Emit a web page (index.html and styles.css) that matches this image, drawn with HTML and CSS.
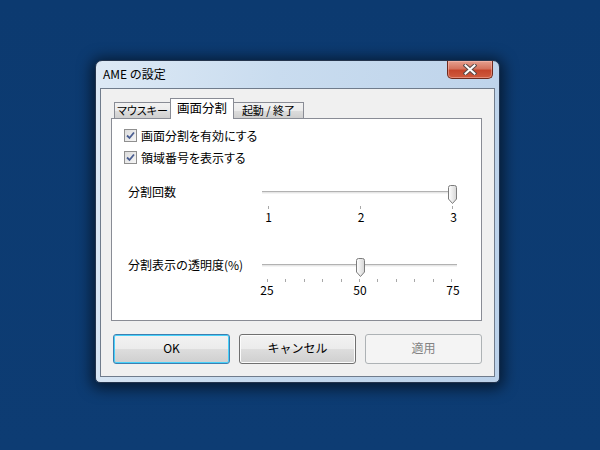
FILE: index.html
```html
<!DOCTYPE html>
<html>
<head>
  <title>AME の設定</title>
  <link rel="stylesheet" href="styles.css">
</head>
<body>
  <div class="desk">
    <div class="window">
      <div class="titlebar">
        <span class="title">AME の設定</span>
        <div class="close-btn">
          <svg width="14" height="11" viewBox="0 0 14 11">
            <path d="M2.5 1.5 L11.5 9.5 M11.5 1.5 L2.5 9.5" stroke="#5a4a48" stroke-width="4" stroke-linecap="square"/>
            <path d="M2.5 1.5 L11.5 9.5 M11.5 1.5 L2.5 9.5" stroke="#ffffff" stroke-width="2" stroke-linecap="square"/>
          </svg>
        </div>
      </div>

      <div class="client">
        <div class="tabs">
          <div class="tab tab-first">マウスキー</div>
          <div class="tab active">画面分割</div>
          <div class="tab tab-last">起動 / 終了</div>
        </div>

        <div class="panel">
          <label class="check-row">
            <span class="checkbox">
              <svg width="13" height="13" viewBox="0 0 13 13">
                <path d="M3 6.5 L5.5 9 L10 3.5" fill="none" stroke="#4a5e92" stroke-width="1.8"/>
              </svg>
            </span>
            画面分割を有効にする
          </label>
          <label class="check-row">
            <span class="checkbox">
              <svg width="13" height="13" viewBox="0 0 13 13">
                <path d="M3 6.5 L5.5 9 L10 3.5" fill="none" stroke="#4a5e92" stroke-width="1.8"/>
              </svg>
            </span>
            領域番号を表示する
          </label>

          <div class="setting setting-count">
            <div class="setting-label">分割回数</div>
            <div class="slider">
              <div class="track-wrap">
                <div class="track"></div>
                <svg class="thumb" style="left: 185px" width="11" height="20" viewBox="0 0 11 20">
                  <defs>
                    <linearGradient id="tg1" x1="0" y1="0" x2="1" y2="0">
                      <stop offset="0" stop-color="#ffffff"/>
                      <stop offset="1" stop-color="#d6d6d6"/>
                    </linearGradient>
                  </defs>
                  <path d="M1.5 2.5 Q1.5 0.5 3.5 0.5 H7.5 Q9.5 0.5 9.5 2.5 V14 L5.5 18.5 L1.5 14 Z" fill="url(#tg1)" stroke="#7c7c7c"/>
                </svg>
              </div>
              <div class="ticks ticks-3">
                <i></i><i></i><i></i>
              </div>
              <div class="nums">
                <span>1</span><span>2</span><span>3</span>
              </div>
            </div>
          </div>

          <div class="setting setting-alpha">
            <div class="setting-label">分割表示の透明度(%)</div>
            <div class="slider">
              <div class="track-wrap">
                <div class="track"></div>
                <svg class="thumb" style="left: 93px" width="11" height="20" viewBox="0 0 11 20">
                  <defs>
                    <linearGradient id="tg2" x1="0" y1="0" x2="1" y2="0">
                      <stop offset="0" stop-color="#ffffff"/>
                      <stop offset="1" stop-color="#d6d6d6"/>
                    </linearGradient>
                  </defs>
                  <path d="M1.5 2.5 Q1.5 0.5 3.5 0.5 H7.5 Q9.5 0.5 9.5 2.5 V14 L5.5 18.5 L1.5 14 Z" fill="url(#tg2)" stroke="#7c7c7c"/>
                </svg>
              </div>
              <div class="ticks ticks-11">
                <i></i><i></i><i></i><i></i><i></i><i></i><i></i><i></i><i></i><i></i><i></i>
              </div>
              <div class="nums">
                <span>25</span><span>50</span><span>75</span>
              </div>
            </div>
          </div>
        </div>

        <div class="buttons">
          <button class="btn btn-default">OK</button>
          <button class="btn">キャンセル</button>
          <button class="btn" disabled>適用</button>
        </div>
      </div>
    </div>
  </div>
</body>
</html>
```

FILE: styles.css
```css
body {
  margin: 0;
  background: #0d3a70;
  font-family: "Noto Sans CJK JP", "Noto Sans", sans-serif;
  font-size: 12px;
  color: #000;
}
.desk {
  width: 600px;
  height: 450px;
  padding: 60px 0 0 95px;
  box-sizing: border-box;
  background: linear-gradient(#0c3a70, #0d3c73);
}
.window {
  width: 405px;
  height: 323px;
  box-sizing: border-box;
  border: 1px solid #25354d;
  border-radius: 7px 7px 5px 5px;
  background: linear-gradient(100deg, #dde9f5 0%, #c9dcef 40%, #bcd2ea 100%);
  box-shadow: 0 2px 14px 4px rgba(0, 0, 0, 0.55);
  padding: 0 4px 5px 4px;
  display: flex;
  flex-direction: column;
}
.titlebar {
  height: 27px;
  display: flex;
  align-items: flex-start;
}
.title {
  margin: 4px 0 0 3px;
  line-height: 18px;
  font-size: 12px;
  color: #000;
}
.close-btn {
  margin-left: auto;
  margin-right: 2px;
  width: 46px;
  height: 18px;
  box-sizing: border-box;
  border: 1px solid #6e2a1d;
  border-top: none;
  border-radius: 0 0 5px 5px;
  background: linear-gradient(#e6a08f, #d5735e 45%, #c5452b 55%, #cf5b3e);
  box-shadow: inset 0 0 0 1px rgba(255, 200, 190, 0.45);
  display: flex;
  align-items: center;
  justify-content: center;
}
.client {
  flex: 1;
  border: 1px solid #707c8c;
  background: #f0f0f0;
  padding: 9px 0 0 10px;
}
.tabs {
  display: flex;
  align-items: flex-end;
  height: 20px;
  padding-left: 3px;
}
.tab {
  height: 15px;
  line-height: 15px;
  border: 1px solid #898c95;
  border-bottom: none;
  background: linear-gradient(#f2f2f2, #ebebeb 50%, #dddddd 51%, #cfcfcf);
  text-align: center;
  font-size: 11px;
  font-feature-settings: "palt";
  white-space: nowrap;
}
.tab-first {
  width: 55px;
}
.tab-last {
  width: 69px;
  margin-left: -1px;
}
.tab.active {
  width: 62px;
  height: 20px;
  line-height: 18px;
  margin-left: -1px;
  margin-bottom: -1px;
  background: #fff;
  position: relative;
  z-index: 1;
  font-size: 12.5px;
  font-feature-settings: normal;
}
.panel {
  width: 371px;
  height: 203px;
  box-sizing: border-box;
  border: 1px solid #898c95;
  background: #fff;
  padding-top: 5px;
}
.check-row {
  display: flex;
  align-items: center;
  height: 22px;
  margin-left: 12px;
  gap: 4px;
  font-size: 12px;
  font-feature-settings: "palt";
}
.checkbox {
  width: 13px;
  height: 13px;
  box-sizing: border-box;
  border: 1px solid #8f8f8f;
  background: linear-gradient(135deg, #dcdcdc, #f6f6f6);
  display: flex;
}
.checkbox svg {
  margin: -1px;
}
.setting {
  display: flex;
  margin-left: 16px;
}
.setting-count {
  margin-top: 17px;
}
.setting-alpha {
  margin-top: 35px;
}
.setting-label {
  width: 134px;
  line-height: 18px;
  margin-top: -2px;
  font-size: 12px;
}
.slider {
  width: 195px;
}
.track-wrap {
  position: relative;
  height: 19px;
}
.track {
  position: relative;
  top: 6px;
  height: 1px;
  border-top: 1px solid #b2b2b2;
  background: #e6e6e6;
  border-bottom: 1px solid #f4f4f4;
}
.thumb {
  position: absolute;
  top: 0;
}
.ticks {
  display: flex;
  justify-content: space-between;
  height: 3px;
  margin-top: 2px;
  padding: 0 4px 0 6px;
}
.ticks-11 {
  padding: 0 5px 0 5px;
}
.ticks i {
  width: 1px;
  background: #a8a8a8;
}
.nums {
  display: flex;
  justify-content: space-between;
  margin: 2px -3px 0 0;
  font-size: 12px;
  line-height: 12px;
}
.nums span {
  width: 13px;
  text-align: center;
}
.setting-alpha .nums span {
  width: 14px;
  margin-left: -2px;
}
.buttons {
  display: flex;
  gap: 9px;
  margin: 13px 0 0 2px;
}
.btn {
  width: 117px;
  height: 30px;
  box-sizing: border-box;
  border: 1px solid #707070;
  border-radius: 3px;
  background: linear-gradient(#f2f2f2, #ebebeb 50%, #dddddd 51%, #cfcfcf);
  box-shadow: inset 0 0 0 1px #fcfcfc;
  font-family: inherit;
  font-size: 12px;
  color: #000;
  padding: 0 0 4px;
}
.btn-default {
  border-color: #3c7fb1;
  box-shadow: inset 0 0 0 1px #48d1fa;
}
.btn:disabled {
  border-color: #adb2b5;
  background: #f4f4f4;
  box-shadow: none;
  color: #838383;
}
```
